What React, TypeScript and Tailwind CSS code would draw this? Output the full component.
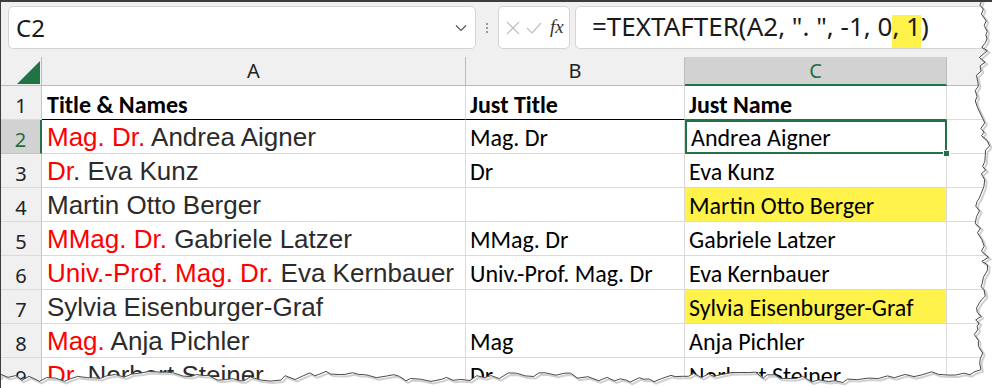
import React from "react"

const CAL = "font-['Carlito','Lato',sans-serif]"
const ARIAL = "font-['Liberation_Sans',Arial,sans-serif]"
const UI = "font-['Noto_Sans','Open_Sans',sans-serif]"

type Row = {
  n: number
  red?: string
  rest: string
  title: string
  name: string
  yellow?: boolean
}

const rows: Row[] = [
  { n: 2, red: "Mag. Dr.", rest: " Andrea Aigner", title: "Mag. Dr", name: "Andrea Aigner" },
  { n: 3, red: "Dr", rest: ". Eva Kunz", title: "Dr", name: "Eva Kunz" },
  { n: 4, rest: "Martin Otto Berger", title: "", name: "Martin Otto Berger", yellow: true },
  { n: 5, red: "MMag. Dr.", rest: " Gabriele Latzer", title: "MMag. Dr", name: "Gabriele Latzer" },
  { n: 6, red: "Univ.-Prof. Mag. Dr.", rest: " Eva Kernbauer", title: "Univ.-Prof. Mag. Dr", name: "Eva Kernbauer" },
  { n: 7, rest: "Sylvia Eisenburger-Graf", title: "", name: "Sylvia Eisenburger-Graf", yellow: true },
  { n: 8, red: "Mag.", rest: " Anja Pichler", title: "Mag", name: "Anja Pichler" },
  { n: 9, red: "Dr.", rest: " Norbert Steiner", title: "Dr", name: "Norbert Steiner" },
]

// torn paper edge, drawn once
function tornEdge() {
  let seed = 7
  const rnd = () => {
    seed = (seed * 9301 + 49297) % 233280
    return seed / 233280
  }
  const pts: [number, number][] = []
  for (let y = 0; y < 372; y += 3 + rnd() * 4) {
    pts.push([982 + 4 * Math.sin(y / 19) + rnd() * 8 - 4, y])
  }
  pts.push([974, 372])
  for (let x = 970; x > 0; x -= 4 + rnd() * 7) {
    pts.push([x, 377 + 3 * Math.sin(x / 31) + rnd() * 6 - 3])
  }
  pts.push([0, 378])
  const line = pts.map((p, i) => (i ? "L" : "M") + p[0].toFixed(1) + " " + p[1].toFixed(1)).join(" ")
  const fill = line + " L 0 388 L 992 388 L 992 0 Z"
  return { line, fill }
}

const edge = tornEdge()

function Cell({ children, className = "" }: { children?: React.ReactNode; className?: string }) {
  return (
    <div className={`h-[34px] flex items-end border-r border-b border-[#dadada] overflow-hidden whitespace-nowrap ${className}`}>
      <span className="whitespace-pre">{children}</span>
    </div>
  )
}

function RowHead({ n, active }: { n: number; active?: boolean }) {
  return (
    <div
      className={`h-[34px] flex items-end justify-center pb-[3px] border-b ${UI} text-[20px] leading-none ${
        active
          ? "bg-[#d2d2d2] text-[#1e6e42] border-r-2 border-r-[#217346] border-b-[#c4c4c4]"
          : "bg-[#f0f0f0] text-[#222] border-r border-r-[#c4c4c4] border-b-[#dadada]"
      }`}
    >
      {n}
    </div>
  )
}

export default function App() {
  return (
    <div className="relative w-[992px] h-[388px] overflow-hidden bg-white border-t-2 border-l border-[#3c3c3c]">
      {/* formula bar */}
      <div className="h-[55px] bg-[#f0f0f0] flex items-start pt-[4px] pl-[7px]">
        <div className="w-[468px] h-[43px] bg-white border border-[#d4d4d4] rounded-[5px] flex items-center pl-[7px] pr-[8px]">
          <span className={`${UI} text-[24px] text-[#1a1a1a] flex-1`}>C2</span>
          <svg width="12" height="8" viewBox="0 0 12 8">
            <path d="M1 1.5 L6 6.5 L11 1.5" fill="none" stroke="#555" strokeWidth="1.2" />
          </svg>
        </div>
        <div className="w-[22px] h-[43px] flex flex-col items-center justify-center gap-[2px]">
          <span className="w-[2px] h-[2px] bg-[#999]" />
          <span className="w-[2px] h-[2px] bg-[#999]" />
          <span className="w-[2px] h-[2px] bg-[#999]" />
        </div>
        <div className="w-[72px] h-[43px] bg-white border border-[#d4d4d4] rounded-[5px] flex items-center pl-[6px] gap-[4px]">
          <svg width="16" height="16" viewBox="0 0 16 16">
            <path d="M2 2 L14 14 M14 2 L2 14" stroke="#c2c2c2" strokeWidth="1.3" />
          </svg>
          <svg width="18" height="16" viewBox="0 0 18 16">
            <path d="M2 8 L7 13 L16 3" fill="none" stroke="#c2c2c2" strokeWidth="1.3" />
          </svg>
          <span className="font-['Liberation_Serif',serif] italic text-[19px] text-[#333] ml-[3px]">fx</span>
        </div>
        <div className="ml-[5px] flex-1 h-[43px] bg-white border border-[#d4d4d4] rounded-l-[5px] flex items-start pt-[8px] pl-[16px]">
          <span className={`${UI} text-[26px] leading-[22px] text-[#1a1a1a] whitespace-pre`}>
            =TEXTAFTER(A2, ". ", -1, 0<span className="inline-block leading-[22px] pb-[11px] bg-[#fff24a]">, 1</span>)
          </span>
        </div>
      </div>

      {/* sheet */}
      <div className="grid grid-cols-[41px_424px_219px_262px_1fr]">
        {/* column headers */}
        <div className="h-[29px] bg-[#f0f0f0] border-r border-b border-[#bcbcbc] relative">
          <svg className="absolute left-[16px] top-[4px]" width="23" height="23" viewBox="0 0 23 23">
            <path d="M23 0 L23 23 L0 23 Z" fill="#217346" />
          </svg>
        </div>
        <div className={`h-[29px] bg-[#f0f0f0] border-r border-b border-[#bcbcbc] flex items-center justify-center ${UI} text-[20px] text-[#222]`}>A</div>
        <div className={`h-[29px] bg-[#f0f0f0] border-r border-b border-[#bcbcbc] flex items-center justify-center ${UI} text-[20px] text-[#222]`}>B</div>
        <div className={`h-[29px] bg-[#d2d2d2] border-r border-r-[#bcbcbc] border-b-2 border-b-[#217346] flex items-center justify-center ${UI} text-[20px] text-[#1e6e42]`}>C</div>
        <div className="h-[29px] bg-[#f0f0f0] border-b border-[#bcbcbc]" />

        {/* row 1 */}
        <RowHead n={1} />
        <Cell className={`border-b-black pl-[5px] pb-[2px] ${CAL} font-bold text-[24px] leading-none text-black`}>Title &amp; Names</Cell>
        <Cell className={`border-b-black pl-[4px] pb-[2px] ${CAL} font-bold text-[24px] leading-none text-black`}>Just Title</Cell>
        <Cell className={`border-b-[#217346] pl-[4px] pb-[2px] ${CAL} font-bold text-[24px] leading-none text-black`}>Just Name</Cell>
        <Cell />

        {rows.map((r) => (
          <React.Fragment key={r.n}>
            <RowHead n={r.n} active={r.n === 2} />
            <Cell className={`pl-[5px] pb-[3px] ${ARIAL} text-[26px] leading-none text-[#2b2b2b]`}>
              {r.red && <span className="text-[#ff0000]">{r.red}</span>}
              {r.rest}
            </Cell>
            <Cell className={`pl-[4px] pb-[3px] ${CAL} text-[24px] leading-none text-black`}>{r.title}</Cell>
            {r.n === 2 ? (
              <div className={`relative h-[34px] flex items-end pl-[4px] pb-[2px] border-2 border-[#217346] ${CAL} text-[24px] leading-none text-black whitespace-nowrap`}>
                {r.name}
                <span className="absolute right-[-5px] bottom-[-5px] w-[7px] h-[7px] bg-[#217346] border border-white" />
              </div>
            ) : (
              <Cell className={`pl-[4px] pb-[3px] ${CAL} text-[24px] leading-none text-black ${r.yellow ? "bg-[#fff24a]" : ""}`}>
                {r.name}
              </Cell>
            )}
            <Cell />
          </React.Fragment>
        ))}
      </div>

      {/* torn paper edge */}
      <svg className="absolute left-[-1px] top-[-2px] pointer-events-none" width="992" height="388" viewBox="0 0 992 388">
        <path d={edge.fill} fill="#ffffff" />
        <path d={edge.line} fill="none" stroke="#d0d0d0" strokeWidth="2" transform="translate(2 2)" />
        <path d={edge.line} fill="none" stroke="#4a4a4a" strokeWidth="1" />
      </svg>
    </div>
  )
}
